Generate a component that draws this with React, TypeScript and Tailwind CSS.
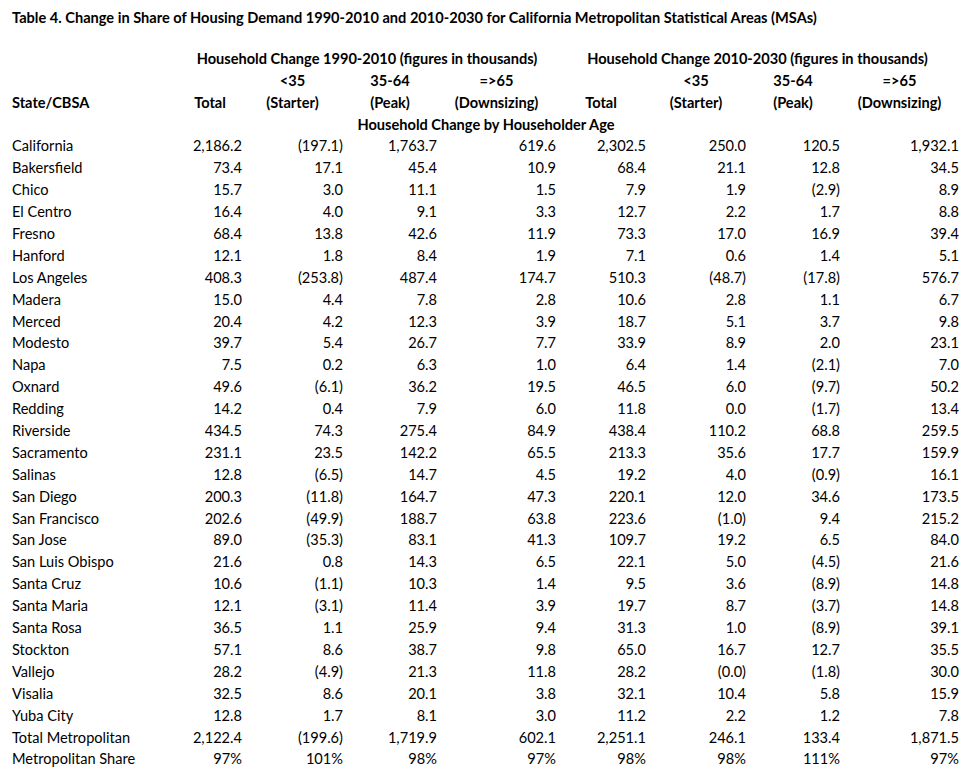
const rows: [string, ...string[]][] = [
  ["California", "2,186.2", "(197.1)", "1,763.7", "619.6", "2,302.5", "250.0", "120.5", "1,932.1"],
  ["Bakersfield", "73.4", "17.1", "45.4", "10.9", "68.4", "21.1", "12.8", "34.5"],
  ["Chico", "15.7", "3.0", "11.1", "1.5", "7.9", "1.9", "(2.9)", "8.9"],
  ["El Centro", "16.4", "4.0", "9.1", "3.3", "12.7", "2.2", "1.7", "8.8"],
  ["Fresno", "68.4", "13.8", "42.6", "11.9", "73.3", "17.0", "16.9", "39.4"],
  ["Hanford", "12.1", "1.8", "8.4", "1.9", "7.1", "0.6", "1.4", "5.1"],
  ["Los Angeles", "408.3", "(253.8)", "487.4", "174.7", "510.3", "(48.7)", "(17.8)", "576.7"],
  ["Madera", "15.0", "4.4", "7.8", "2.8", "10.6", "2.8", "1.1", "6.7"],
  ["Merced", "20.4", "4.2", "12.3", "3.9", "18.7", "5.1", "3.7", "9.8"],
  ["Modesto", "39.7", "5.4", "26.7", "7.7", "33.9", "8.9", "2.0", "23.1"],
  ["Napa", "7.5", "0.2", "6.3", "1.0", "6.4", "1.4", "(2.1)", "7.0"],
  ["Oxnard", "49.6", "(6.1)", "36.2", "19.5", "46.5", "6.0", "(9.7)", "50.2"],
  ["Redding", "14.2", "0.4", "7.9", "6.0", "11.8", "0.0", "(1.7)", "13.4"],
  ["Riverside", "434.5", "74.3", "275.4", "84.9", "438.4", "110.2", "68.8", "259.5"],
  ["Sacramento", "231.1", "23.5", "142.2", "65.5", "213.3", "35.6", "17.7", "159.9"],
  ["Salinas", "12.8", "(6.5)", "14.7", "4.5", "19.2", "4.0", "(0.9)", "16.1"],
  ["San Diego", "200.3", "(11.8)", "164.7", "47.3", "220.1", "12.0", "34.6", "173.5"],
  ["San Francisco", "202.6", "(49.9)", "188.7", "63.8", "223.6", "(1.0)", "9.4", "215.2"],
  ["San Jose", "89.0", "(35.3)", "83.1", "41.3", "109.7", "19.2", "6.5", "84.0"],
  ["San Luis Obispo", "21.6", "0.8", "14.3", "6.5", "22.1", "5.0", "(4.5)", "21.6"],
  ["Santa Cruz", "10.6", "(1.1)", "10.3", "1.4", "9.5", "3.6", "(8.9)", "14.8"],
  ["Santa Maria", "12.1", "(3.1)", "11.4", "3.9", "19.7", "8.7", "(3.7)", "14.8"],
  ["Santa Rosa", "36.5", "1.1", "25.9", "9.4", "31.3", "1.0", "(8.9)", "39.1"],
  ["Stockton", "57.1", "8.6", "38.7", "9.8", "65.0", "16.7", "12.7", "35.5"],
  ["Vallejo", "28.2", "(4.9)", "21.3", "11.8", "28.2", "(0.0)", "(1.8)", "30.0"],
  ["Visalia", "32.5", "8.6", "20.1", "3.8", "32.1", "10.4", "5.8", "15.9"],
  ["Yuba City", "12.8", "1.7", "8.1", "3.0", "11.2", "2.2", "1.2", "7.8"],
  ["Total Metropolitan", "2,122.4", "(199.6)", "1,719.9", "602.1", "2,251.1", "246.1", "133.4", "1,871.5"],
  ["Metropolitan Share", "97%", "101%", "98%", "97%", "98%", "98%", "111%", "97%"],
];

const cols = "grid grid-cols-[178px_64px_101px_94px_119px_90px_100px_94px_119px]";
const cell = "h-[21.9px] leading-[21.9px] whitespace-nowrap";

export default function App() {
  return (
    <div className="min-h-screen bg-white text-black text-[14.6px] font-['Lato','Liberation_Sans',sans-serif] pt-[7px]">
      <h1 className={`${cell} pl-3 font-bold`}>
        Table 4. Change in Share of Housing Demand 1990-2010 and 2010-2030 for California Metropolitan Statistical Areas (MSAs)
      </h1>

      <div className={`${cols} mt-[19px] font-bold`}>
        <div className={cell} />
        <div className={`${cell} col-span-4 text-center`}>Household Change 1990-2010 (figures in thousands)</div>
        <div className={`${cell} col-span-4 text-center`}>Household Change 2010-2030 (figures in thousands)</div>

        <div className={cell} />
        <div className={cell} />
        <div className={`${cell} text-center`}>&lt;35</div>
        <div className={`${cell} text-center`}>35-64</div>
        <div className={`${cell} text-center`}>=&gt;65</div>
        <div className={cell} />
        <div className={`${cell} text-center`}>&lt;35</div>
        <div className={`${cell} text-center`}>35-64</div>
        <div className={`${cell} text-center`}>=&gt;65</div>

        <div className={`${cell} pl-3`}>State/CBSA</div>
        <div className={`${cell} text-center`}>Total</div>
        <div className={`${cell} text-center`}>(Starter)</div>
        <div className={`${cell} text-center`}>(Peak)</div>
        <div className={`${cell} text-center`}>(Downsizing)</div>
        <div className={`${cell} text-center`}>Total</div>
        <div className={`${cell} text-center`}>(Starter)</div>
        <div className={`${cell} text-center`}>(Peak)</div>
        <div className={`${cell} text-center`}>(Downsizing)</div>

        <div className={`${cell} col-start-4 col-span-3 flex justify-center pr-[17px]`}>
          Household Change by Householder Age
        </div>
      </div>

      <div className={cols}>
        {rows.map(([name, ...vals]) => (
          <div key={name} className="contents">
            <div className={`${cell} pl-3`}>{name}</div>
            {vals.map((v, i) => (
              <div key={i} className={`${cell} text-right`}>
                {v}
              </div>
            ))}
          </div>
        ))}
      </div>
    </div>
  );
}
